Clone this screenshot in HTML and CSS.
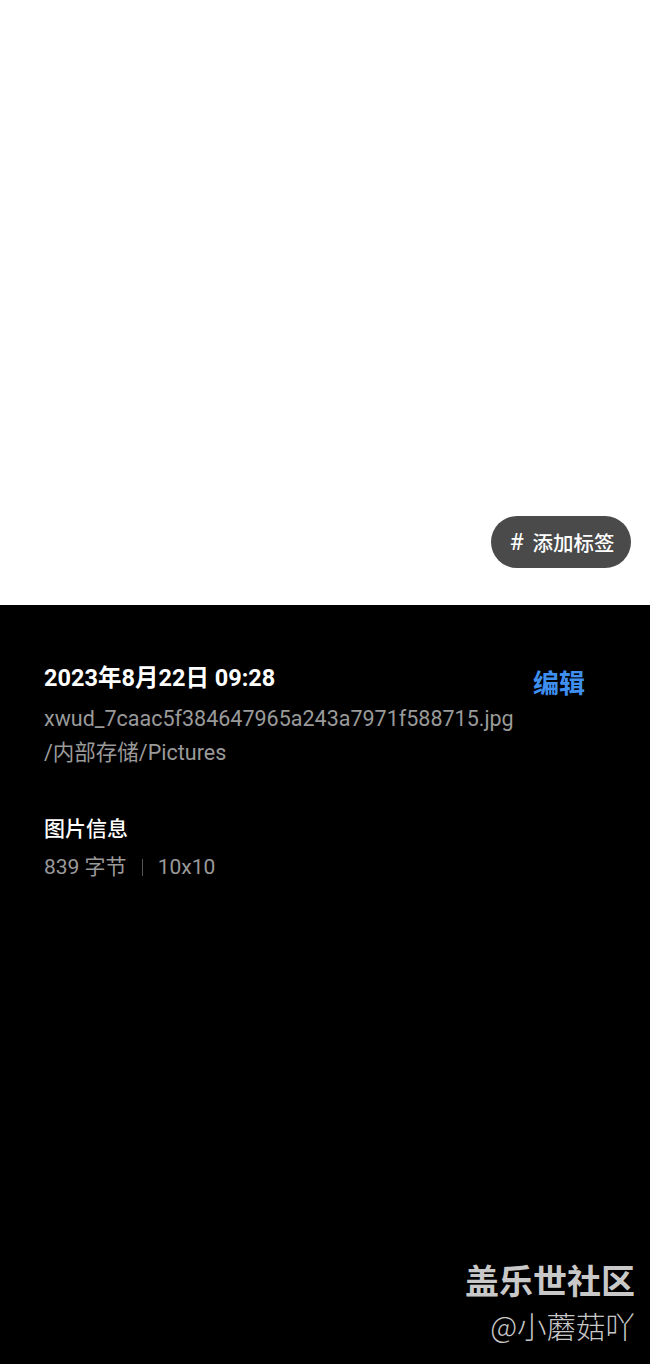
FILE: index.html
```html
<!DOCTYPE html>
<html lang="zh-CN">
  <head>
    <meta charset="UTF-8" />
    <meta name="viewport" content="width=device-width, initial-scale=1.0" />
    <title>详细信息</title>
    <link rel="stylesheet" href="styles.css">
  </head>
  <body>
    <div class="preview">
      <button class="tag-btn"><span class="hash">#</span>添加标签</button>
    </div>
    <div class="details">
      <div class="head-row">
        <div class="date">2023年8月22日 09:28</div>
        <a class="edit">编辑</a>
      </div>
      <div class="file-name">xwud_7caac5f384647965a243a7971f588715.jpg</div>
      <div class="file-path">/内部存储/Pictures</div>

      <div class="info">
        <h3>图片信息</h3>
        <div class="info-line">
          <span>839 字节</span>
          <span class="sep"></span>
          <span>10x10</span>
        </div>
      </div>

      <div class="watermark">
        <div class="wm-title">盖乐世社区</div>
        <div class="wm-user">@小蘑菇吖</div>
      </div>
    </div>
  </body>
</html>
```

FILE: styles.css
```css
* {
  box-sizing: border-box;
}
body {
  margin: 0;
  font-family: Roboto, "Noto Sans CJK SC", sans-serif;
  background-color: #000;
}
.preview {
  height: 605px;
  background-color: #fff;
  display: flex;
  align-items: flex-end;
  justify-content: flex-end;
  padding: 0 19px 37px 0;
}
.tag-btn {
  height: 52px;
  width: 140px;
  border: none;
  border-radius: 26px;
  background-color: #4a4a4a;
  color: #fff;
  font-family: Roboto, "Noto Sans CJK SC", sans-serif;
  font-size: 20.5px;
  font-weight: 500;
  padding: 0 0 0 2px;
  display: flex;
  align-items: center;
  justify-content: center;
}
.tag-btn .hash {
  font-size: 23px;
  font-weight: 400;
  margin-right: 9px;
}
.details {
  position: relative;
  height: 759px;
  padding: 53px 65px 0 44px;
  color: #fff;
}
.head-row {
  display: flex;
  justify-content: space-between;
  align-items: center;
  height: 36px;
}
.date {
  font-size: 23.5px;
  font-weight: bold;
}
.edit {
  color: #3f8ff0;
  font-size: 26px;
  font-weight: bold;
  margin-top: 10px;
}
.file-name,
.file-path {
  color: #9a9a9a;
  font-size: 21.5px;
  line-height: 34px;
}
.file-name {
  margin-top: 8px;
}
.info {
  margin-top: 42px;
}
.info h3 {
  margin: 0;
  font-size: 21px;
  font-weight: 500;
  line-height: 34px;
}
.info-line {
  display: flex;
  align-items: center;
  color: #9a9a9a;
  font-size: 21px;
  line-height: 32px;
  margin-top: 5px;
}
.sep {
  width: 1px;
  height: 17px;
  background-color: #555;
  margin: 0 15px;
}
.watermark {
  position: absolute;
  right: 15px;
  bottom: 16px;
  text-align: right;
  color: #c8c8c8;
  font-family: "Noto Sans CJK SC", sans-serif;
}
.wm-title {
  font-size: 34px;
  font-weight: bold;
  line-height: 44px;
}
.wm-user {
  font-size: 29.5px;
  font-weight: 300;
  line-height: 46px;
}
```
